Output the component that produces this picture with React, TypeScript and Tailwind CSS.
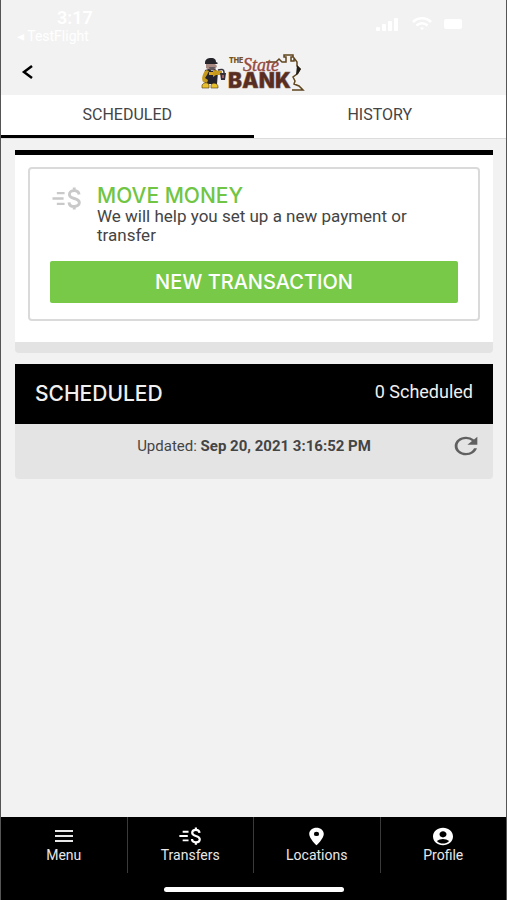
import type { ReactNode } from "react";
import { MdAccountCircle, MdLocationOn, MdRefresh } from "react-icons/md";

function MoneyIcon({ className }: { className: string }) {
  return (
    <svg viewBox="0 0 30 24" preserveAspectRatio="none" className={className} fill="none" stroke="currentColor" aria-hidden="true">
      <path d="M5 6.3h8M0.5 12h11.5M5 17.7h8" strokeWidth="2.400" />
      <path
        d="M28 7.8c-.3-2.5-2.2-4-5-4s-5 1.500-5 4c0 2.400 1.800 3.400 5 4.200s5.300 1.900 5.300 4.300-2.300 4.100-5.300 4.100-5.200-1.500-5.400-4.400M23 0.500v3.500M23 20v3.500"
        strokeWidth="3"
      />
    </svg>
  );
}

function BankLogo() {
  return (
    <svg viewBox="0 0 106 38" className="h-[38px] w-[106px]" role="img" aria-label="The State Bank">
      {/* Miner mascot with a lantern */}
      <path d="M4 10c0-4 3-5 6-5 4 0 5 2 5 4l2 1-1 1H4z" fill="#24242a" />
      <path d="M5 11h9l2 2-2 4H8l-3-2z" fill="#a98a82" />
      <path d="M8 14h6l-1 3H9z" fill="#625a60" />
      <path d="M4 17l4-1 3 2 3-2 3 3-1 12H4l-1-7z" fill="#25242c" />
      <path d="M5 17l3 1-2 4-2 3 3 2-1 3-4-1c-2-4 0-9 3-12zM12 17l9 1v4h-6l-3 2z" fill="#c69b1e" />
      <path d="M8 19h4v3H8z" fill="#d8a824" />
      <path d="M17 17c3-1 6-1 6 2v3" fill="none" stroke="#353039" strokeWidth="1.500" />
      <path d="M19 20h6l-1 7h-4z" fill="#342f39" />
      <path d="M21 22h2v3h-2z" fill="#9c6165" />
      <path d="M1 32c2-3 6-3 7 0v3H1zM10 32c2-3 6-2 7 1v2h-7z" fill="#e8bf2d" stroke="#4a3513" strokeWidth=".6" />
      {/* State outline */}
      <path
        d="M65 9h10l3-3 3 3h4V4h-2V2h9v2h-2v4h3V5l3 4v4l3 3-3 5-4 3 2 4-1 3 5 2 4 4H91"
        fill="none"
        stroke="#5f461f"
        strokeWidth="1.500"
      />
      <path d="M96 12l4 4-3 5-2 1z" fill="#211c16" />
      <text x="28" y="10" fontFamily="Inter, sans-serif" fontSize="7" fontWeight="900" fill="#75541e">THE</text>
      <text x="27" y="35" fontFamily="Inter, sans-serif" fontSize="21" fontWeight="900" fill="#572d24" stroke="#8a6040" strokeWidth=".4">BANK</text>
      <text x="42" y="18" fontFamily="Liberation Serif, serif" fontSize="18" fontStyle="italic" fill="#96493f" stroke="#96493f" strokeWidth=".4">State</text>
    </svg>
  );
}

function StatusBar() {
  return (
    <div className="flex h-12 items-start justify-between pr-7 pl-4 text-white">
      <div className="pt-2">
        <p className="pl-10 text-lg leading-5 font-semibold">3:17</p>
        <p className="text-sm leading-4">◂ TestFlight</p>
      </div>
      <div className="flex items-center gap-2 pt-4">
        <svg viewBox="0 0 24 16" className="h-4 w-6" fill="currentColor" aria-hidden="true">
          <rect x="0" y="11" width="4" height="4" rx="1" />
          <rect x="6" y="8" width="4" height="7" rx="1" />
          <rect x="12" y="5" width="4" height="10" rx="1" />
          <rect x="18" y="2" width="4" height="13" rx="1" />
        </svg>
        <svg viewBox="0 0 20 16" className="ml-1 h-4 w-5" fill="none" stroke="currentColor" strokeWidth="2.500" aria-hidden="true">
          <path d="M1 6c5-5 13-5 18 0M4.500 9.500c3-3 8-3 11 0" />
          <path d="M10 14l-2-2c1-1 3-1 4 0z" fill="currentColor" stroke="none" />
        </svg>
        <div className="ml-1 h-[10px] w-[18px] rounded-xs bg-white" />
        <div className="w-2" />
      </div>
    </div>
  );
}

function NavItem({ label, icon }: { label: string; icon: ReactNode }) {
  return (
    <button type="button" className="flex h-14 flex-1 flex-col items-center border-r border-[#3a3a3a] pt-2 text-sm leading-4 text-[#e8e8e8] last:border-r-0">
      <span className="flex h-[22px] items-center">{icon}</span>
      {label}
    </button>
  );
}

export default function App() {
  return (
    <div className="flex min-h-screen flex-col border-x border-[#555] bg-[#f2f2f2] font-['Roboto',sans-serif] text-[#444]">
      <StatusBar />
      <header className="grid h-[47px] grid-cols-[1fr_auto_1fr] items-center">
        <button type="button" aria-label="Back" className="ml-5 flex h-6 w-6 items-center text-black">
          <svg viewBox="0 0 14 14" className="h-[14px] w-[14px]" fill="none" stroke="currentColor" strokeWidth="2.500" aria-hidden="true">
            <path d="M11 1L3 7l8 6" />
          </svg>
        </button>
        <BankLogo />
      </header>
      <div role="tablist" className="flex h-11 border-b border-[#dcdcdc] bg-white text-base">
        <button type="button" role="tab" aria-selected="true" className="flex-1 border-b-3 border-black">SCHEDULED</button>
        <button type="button" role="tab" aria-selected="false" className="flex-1 border-b-3 border-transparent">HISTORY</button>
      </div>

      <main className="flex flex-1 flex-col gap-[11px] px-[13px] pt-[11px] pl-[14px]">
        <section className="rounded-b border-t-5 border-b-11 border-t-black border-b-[#e3e3e3] bg-white px-[13px] pt-3 pb-[21px]">
          <div className="rounded border-2 border-[#dadada] px-5 pt-4 pb-4">
            <div className="flex pb-4">
              <MoneyIcon className="mt-[2px] ml-[2px] h-[23px] w-[29px] shrink-0 text-[#c9c9c9]" />
              <div className="pl-4">
                <h2 className="font-['Inter',sans-serif] text-[21px] leading-[22px] font-medium text-[#70c544]">MOVE MONEY</h2>
                <p className="text-[17px] leading-[19px]">We will help you set up a new payment or transfer</p>
              </div>
            </div>
            <button type="button" className="h-[42px] w-full rounded-xs bg-[#78c948] font-['Inter',sans-serif] text-xl font-medium text-white">
              NEW TRANSACTION
            </button>
          </div>
        </section>

        <section className="overflow-hidden rounded-b bg-[#e4e4e4]">
          <div className="flex h-[60px] items-center justify-between bg-black px-5 text-[#f0f0f0]">
            <h2 className="font-['Inter',sans-serif] text-[21px] font-medium">SCHEDULED</h2>
            <p className="pb-1 text-lg">0 Scheduled</p>
          </div>
          <div className="grid h-[55px] grid-cols-[1fr_auto_1fr] items-start pt-2">
            <p className="col-start-2 pt-1 text-[15px] leading-5">
              Updated: <strong className="font-bold">Sep 20, 2021 3:16:52 PM</strong>
            </p>
            <button type="button" aria-label="Refresh" className="mr-[10px] justify-self-end text-[#606060]">
              <MdRefresh preserveAspectRatio="none" className="h-7 w-[34px]" />
            </button>
          </div>
        </section>
      </main>

      <footer className="flex h-[83px] flex-col bg-black">
        <nav className="flex" aria-label="Main">
          <NavItem
            label="Menu"
            icon={
              <svg viewBox="0 0 18 12" className="h-3 w-[18px]" fill="currentColor" aria-hidden="true">
                <path d="M0 0h18v2H0zM0 5h18v2H0zM0 10h18v2H0z" />
              </svg>
            }
          />
          <NavItem label="Transfers" icon={<MoneyIcon className="h-[18px] w-[22px] text-white" />} />
          <NavItem label="Locations" icon={<MdLocationOn preserveAspectRatio="none" className="h-[21px] w-[25px] text-white" />} />
          <NavItem label="Profile" icon={<MdAccountCircle preserveAspectRatio="none" className="h-[21px] w-6 text-white" />} />
        </nav>
        <div className="mx-auto mt-[14px] h-[5px] w-[180px] rounded-full bg-white" />
      </footer>
    </div>
  );
}
